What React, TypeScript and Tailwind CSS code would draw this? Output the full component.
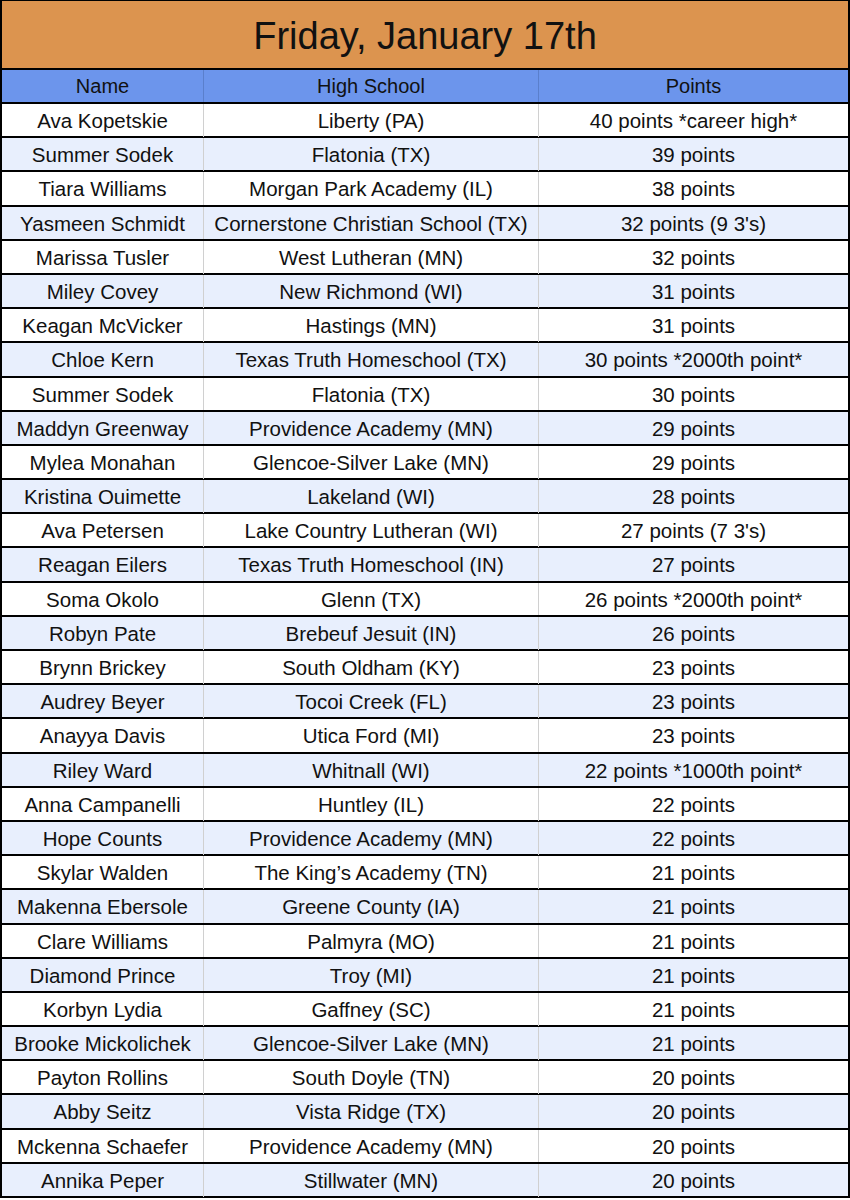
const ROWS: [string, string, string][] = [
  ['Ava Kopetskie', 'Liberty (PA)', '40 points *career high*'],
  ['Summer Sodek', 'Flatonia (TX)', '39 points'],
  ['Tiara Williams', 'Morgan Park Academy (IL)', '38 points'],
  ['Yasmeen Schmidt', 'Cornerstone Christian School (TX)', "32 points (9 3's)"],
  ['Marissa Tusler', 'West Lutheran (MN)', '32 points'],
  ['Miley Covey', 'New Richmond (WI)', '31 points'],
  ['Keagan McVicker', 'Hastings (MN)', '31 points'],
  ['Chloe Kern', 'Texas Truth Homeschool (TX)', '30 points *2000th point*'],
  ['Summer Sodek', 'Flatonia (TX)', '30 points'],
  ['Maddyn Greenway', 'Providence Academy (MN)', '29 points'],
  ['Mylea Monahan', 'Glencoe-Silver Lake (MN)', '29 points'],
  ['Kristina Ouimette', 'Lakeland (WI)', '28 points'],
  ['Ava Petersen', 'Lake Country Lutheran (WI)', "27 points (7 3's)"],
  ['Reagan Eilers', 'Texas Truth Homeschool (IN)', '27 points'],
  ['Soma Okolo', 'Glenn (TX)', '26 points *2000th point*'],
  ['Robyn Pate', 'Brebeuf Jesuit (IN)', '26 points'],
  ['Brynn Brickey', 'South Oldham (KY)', '23 points'],
  ['Audrey Beyer', 'Tocoi Creek (FL)', '23 points'],
  ['Anayya Davis', 'Utica Ford (MI)', '23 points'],
  ['Riley Ward', 'Whitnall (WI)', '22 points *1000th point*'],
  ['Anna Campanelli', 'Huntley (IL)', '22 points'],
  ['Hope Counts', 'Providence Academy (MN)', '22 points'],
  ['Skylar Walden', 'The King\u2019s Academy (TN)', '21 points'],
  ['Makenna Ebersole', 'Greene County (IA)', '21 points'],
  ['Clare Williams', 'Palmyra (MO)', '21 points'],
  ['Diamond Prince', 'Troy (MI)', '21 points'],
  ['Korbyn Lydia', 'Gaffney (SC)', '21 points'],
  ['Brooke Mickolichek', 'Glencoe-Silver Lake (MN)', '21 points'],
  ['Payton Rollins', 'South Doyle (TN)', '20 points'],
  ['Abby Seitz', 'Vista Ridge (TX)', '20 points'],
  ['Mckenna Schaefer', 'Providence Academy (MN)', '20 points'],
  ['Annika Peper', 'Stillwater (MN)', '20 points'],
]

const COLS = 'grid grid-cols-[202px_335px_1fr]'

export default function App() {
  return (
    <div className="w-[850px] h-[1200px] bg-white font-['Liberation_Sans',Arial,sans-serif] text-[#111]">
      <div className="border-x-2 border-t border-b-2 border-black">
        {/* Title */}
        <div className="h-[67px] bg-[#dc944f] flex items-center justify-center text-[38px] leading-none pt-[2px]">
          Friday, January 17th
        </div>

        {/* Header */}
        <div className={`${COLS} h-[34px] border-t-2 border-black bg-[#6c95ec] text-[20px]`}>
          <div className="flex items-center justify-center border-r border-[#5a7fcc]">Name</div>
          <div className="flex items-center justify-center border-r border-[#5a7fcc]">High School</div>
          <div className="flex items-center justify-center">Points</div>
        </div>

        {ROWS.map((r, i) => (
          <div
            key={i}
            className={`${COLS} h-[34.2px] border-t-2 border-black text-[20.5px] ${i % 2 === 1 ? 'bg-[#e8effd]' : 'bg-white'}`}
          >
            <div className="flex items-center justify-center pt-[2px] border-r border-[#d0d0d0] whitespace-nowrap">{r[0]}</div>
            <div className="flex items-center justify-center pt-[2px] border-r border-[#d0d0d0] whitespace-nowrap">{r[1]}</div>
            <div className="flex items-center justify-center pt-[2px] whitespace-nowrap">{r[2]}</div>
          </div>
        ))}
      </div>
    </div>
  )
}
